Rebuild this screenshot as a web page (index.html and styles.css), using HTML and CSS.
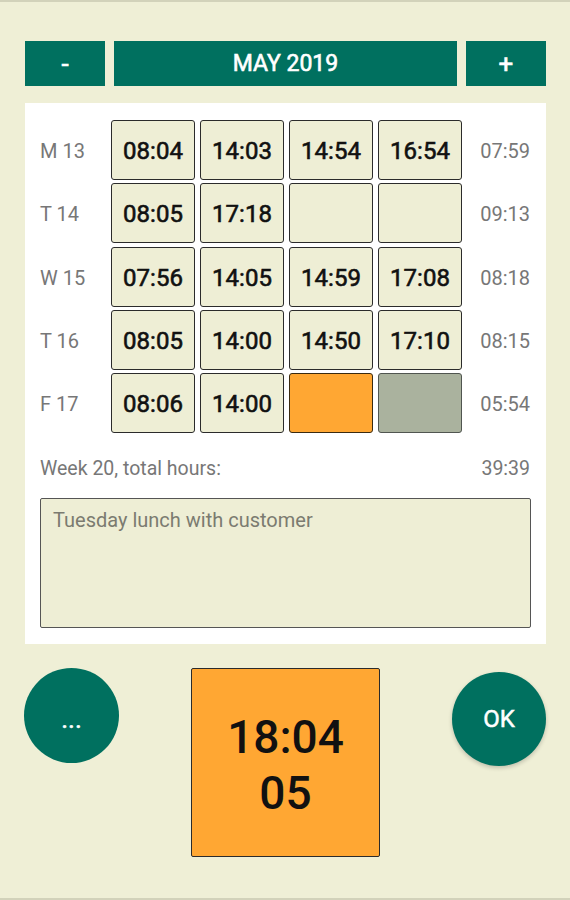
FILE: index.html
```html
<!DOCTYPE html>
<html>
<head>
  <meta charset="UTF-8">
  <title>Time clock</title>
  <link rel="stylesheet" href="styles.css">
</head>
<body>
  <div class="screen">
    <div class="nav">
      <a href="javascript:;" class="nav_btn nav_small">-</a>
      <a href="javascript:;" class="nav_btn nav_month">MAY 2019</a>
      <a href="javascript:;" class="nav_btn nav_small">+</a>
    </div>

    <div class="panel">
      <div class="week">
        <span class="day">M 13</span>
        <span class="cell">08:04</span>
        <span class="cell">14:03</span>
        <span class="cell">14:54</span>
        <span class="cell">16:54</span>
        <span class="sum">07:59</span>

        <span class="day">T 14</span>
        <span class="cell">08:05</span>
        <span class="cell">17:18</span>
        <span class="cell"></span>
        <span class="cell"></span>
        <span class="sum">09:13</span>

        <span class="day">W 15</span>
        <span class="cell">07:56</span>
        <span class="cell">14:05</span>
        <span class="cell">14:59</span>
        <span class="cell">17:08</span>
        <span class="sum">08:18</span>

        <span class="day">T 16</span>
        <span class="cell">08:05</span>
        <span class="cell">14:00</span>
        <span class="cell">14:50</span>
        <span class="cell">17:10</span>
        <span class="sum">08:15</span>

        <span class="day">F 17</span>
        <span class="cell">08:06</span>
        <span class="cell">14:00</span>
        <span class="cell cell_now"></span>
        <span class="cell cell_off"></span>
        <span class="sum">05:54</span>
      </div>

      <div class="total">
        <span>Week 20, total hours:</span>
        <span>39:39</span>
      </div>

      <textarea class="note">Tuesday lunch with customer</textarea>
    </div>

    <div class="actions">
      <a href="javascript:;" class="round round_more">...</a>
      <div class="clock">
        <span>18:04</span>
        <span>05</span>
      </div>
      <a href="javascript:;" class="round round_ok">OK</a>
    </div>
  </div>
</body>
</html>
```

FILE: styles.css
```css
* {
  margin: 0;
  padding: 0;
  box-sizing: border-box;
}
a {
  text-decoration: none;
}
body {
  background-color: #efefd6;
  font-family: Roboto, "Liberation Sans", sans-serif;
}
.screen {
  height: 900px;
  border-top: 2px solid #d2d2ba;
  border-bottom: 2px solid #d2d2ba;
  padding: 39px 24px 0 25px;
}

/* month switcher */
.nav {
  display: flex;
  gap: 9px;
  height: 45px;
}
.nav_btn {
  display: flex;
  align-items: center;
  justify-content: center;
  background-color: #00705f;
  color: #fff;
  font-size: 23px;
  -webkit-text-stroke: 0.6px #fff;
}
.nav_small {
  width: 80px;
  font-size: 26px;
}
.nav_month {
  flex: 1;
}

/* week table */
.panel {
  margin-top: 17px;
  background-color: #fff;
  padding: 17px 15px 16px 15px;
}
.week {
  display: grid;
  grid-template-columns: 66px repeat(4, 84px) 1fr;
  grid-auto-rows: 60px;
  column-gap: 5px;
  row-gap: 3.25px;
  align-items: center;
}
.day,
.sum {
  font-size: 20px;
  color: #777;
  padding-top: 2px;
}
.sum {
  text-align: right;
  padding-right: 1px;
}
.cell {
  height: 60px;
  display: flex;
  align-items: center;
  justify-content: center;
  background-color: #eeeed5;
  border: 1.5px solid #2b2b2b;
  border-radius: 3px;
  font-size: 24px;
  color: #111;
  -webkit-text-stroke: 0.6px #111;
  padding-top: 2px;
}
.cell_now {
  background-color: #ffa733;
  border-color: #3a2a10;
}
.cell_off {
  background-color: #aab29e;
  border-color: #505550;
}
.total {
  display: flex;
  justify-content: space-between;
  margin-top: 24px;
  padding-right: 1px;
  font-size: 19.5px;
  color: #777;
  line-height: 24px;
}
.note {
  display: block;
  width: 100%;
  height: 130px;
  margin-top: 17px;
  padding: 9px 12px;
  background-color: #eeeed5;
  border: 1.5px solid #555;
  border-radius: 2px;
  font-family: Roboto, "Liberation Sans", sans-serif;
  font-size: 20px;
  color: #7b7b70;
  resize: none;
}

/* bottom row */
.actions {
  display: flex;
  align-items: flex-start;
  margin-top: 24px;
}
.round {
  display: flex;
  align-items: center;
  justify-content: center;
  width: 95px;
  height: 95px;
  border-radius: 50%;
  background-color: #00705f;
  color: #fff;
  -webkit-text-stroke: 0.5px #fff;
}
.round_more {
  margin-left: -1px;
  font-size: 26px;
  padding-top: 6px;
}
.round_ok {
  width: 94px;
  height: 94px;
  margin-top: 4px;
  margin-left: auto;
  font-size: 24px;
  box-shadow: 0 2px 4px rgba(0,0,0,0.2);
}
.clock {
  width: 189px;
  height: 189px;
  margin-left: 72px;
  display: flex;
  flex-direction: column;
  align-items: center;
  justify-content: center;
  background-color: #ffa733;
  border: 1.5px solid #2b2b2b;
  border-radius: 2px;
  font-size: 46px;
  font-weight: 500;
  line-height: 56px;
  color: #111;
  padding-top: 4px;
}
```
